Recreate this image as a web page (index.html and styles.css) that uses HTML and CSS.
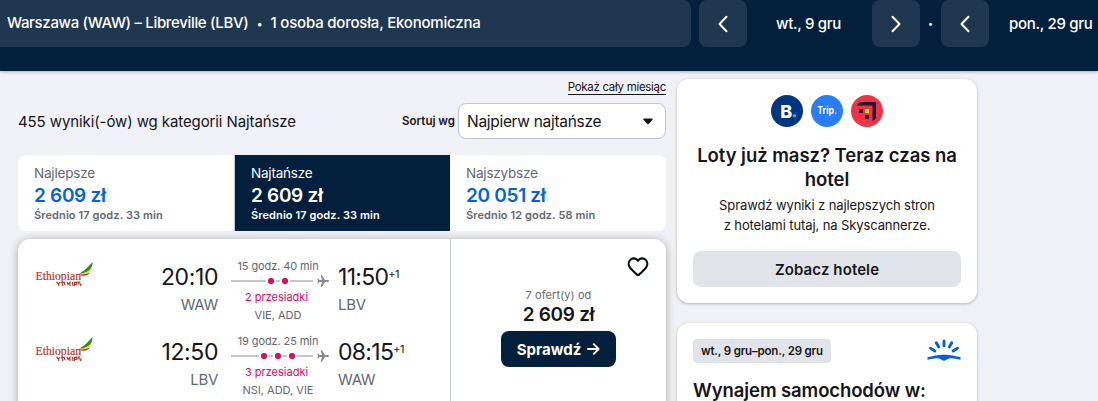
FILE: index.html
```html
<!DOCTYPE html>
<html lang="pl">
<head>
    <meta charset="UTF-8">
    <meta name="viewport" content="width=device-width, initial-scale=1.0">
    <title>Loty Warszawa – Libreville</title>
    <link rel="stylesheet" href="styles.css">
</head>
<body>
    <header class="header">
        <div class="search-summary"><span class="route">Warszawa (WAW) – Libreville (LBV)</span><span class="bullet">•</span><span class="travellers">1 osoba dorosła, Ekonomiczna</span></div>
        <button class="arrow-btn"><svg width="24" height="24" viewBox="0 0 24 24"><path d="M15.500 4.800L8.500 12l7 7.200"/></svg></button>
        <span class="date date-out">wt., 9 gru</span>
        <button class="arrow-btn"><svg width="24" height="24" viewBox="0 0 24 24"><path d="M8.500 4.800l7 7.200-7 7.200"/></svg></button>
        <span class="dot">•</span>
        <button class="arrow-btn"><svg width="24" height="24" viewBox="0 0 24 24"><path d="M15.500 4.800L8.500 12l7 7.200"/></svg></button>
        <span class="date date-back">pon., 29 gru</span>
    </header>

    <div class="page">
        <main class="results">
            <div class="month-row"><a class="month-link">Pokaż cały miesiąc</a></div>
            <div class="sort-row">
                <span class="count">455 wyniki(-ów) wg kategorii Najtańsze</span>
                <span class="sort-label">Sortuj wg</span>
                <div class="select">
                    <span>Najpierw najtańsze</span>
                    <svg width="10" height="7" viewBox="0 0 10 7"><path d="M1 .5h8c.8 0 1 .8.500 1.300L6 5.800c-.6.600-1.400.600-2 0L.5 1.800C0 1.300.2.500 1 .5z" fill="#161616"/></svg>
                </div>
            </div>

            <div class="tabs">
                <div class="tab">
                    <span class="tab-name">Najlepsze</span>
                    <span class="tab-price">2 609 zł</span>
                    <span class="tab-time">Średnio 17 godz. 33 min</span>
                </div>
                <div class="tab active">
                    <span class="tab-name">Najtańsze</span>
                    <span class="tab-price">2 609 zł</span>
                    <span class="tab-time">Średnio 17 godz. 33 min</span>
                </div>
                <div class="tab">
                    <span class="tab-name">Najszybsze</span>
                    <span class="tab-price">20 051 zł</span>
                    <span class="tab-time">Średnio 12 godz. 58 min</span>
                </div>
            </div>

            <div class="ticket">
                <div class="legs">
                    <div class="leg">
                        <svg class="airline" width="58" height="27" viewBox="0 0 58 27">
                            <path d="M56.500 0C52.500 4 50 8 43 11.800C51 11.500 57 7 56.500 0Z" fill="#2f8a1e"/>
                            <path d="M56 5.500C53.500 9.500 49 11.300 43 12C50 12.800 55 11 56 5.500Z" fill="#f6d21a"/>
                            <path d="M53.500 10.500C50 12.500 46 12.600 41.500 12.600C46 14.300 52 14.300 53.500 10.500Z" fill="#b3241c"/>
                            <text x="-.5" y="17.500" class="logo-name" textLength="45.500" lengthAdjust="spacingAndGlyphs">Ethiopian</text>
                            <path d="M20.500 20l2 2 1.500-2M22.500 22l.5 2M27 24l-1-3 2-1 1 3M31 20l1 2.500 2-2v3.500M36.500 20l.5 4M38.500 24v-3.500l2.500-.3v2l-2 .3M44.500 20h-2l.5 2h2l-.5 2"/>
                        </svg>
                        <div class="point depart"><span class="time">20:10</span><span class="code">WAW</span></div>
                        <div class="stops">
                            <span class="duration">15 godz. 40 min</span>
                            <div class="track">
                                <div class="line"><i></i><i></i></div>
                                <svg width="12" height="12" viewBox="0 0 12 12"><path d="M12 6c0-.6-.6-.9-1.300-.9H8L5 .3H3.600L5 5.100H2.300L1.200 3.500H.3L1 6l-.7 2.500h.9l1.100-1.600H5l-1.400 4.800H5l3-4.800h2.700c.7 0 1.300-.3 1.300-.9z" fill="#8c8799"/></svg>
                            </div>
                            <span class="stop-count">2 przesiadki</span>
                            <span class="via">VIE, ADD</span>
                        </div>
                        <div class="point arrive"><span class="time">11:50<sup>+1</sup></span><span class="code">LBV</span></div>
                    </div>
                    <div class="leg">
                        <svg class="airline" width="58" height="27" viewBox="0 0 58 27">
                            <path d="M56.500 0C52.500 4 50 8 43 11.800C51 11.500 57 7 56.500 0Z" fill="#2f8a1e"/>
                            <path d="M56 5.500C53.500 9.500 49 11.300 43 12C50 12.800 55 11 56 5.500Z" fill="#f6d21a"/>
                            <path d="M53.500 10.500C50 12.500 46 12.600 41.500 12.600C46 14.300 52 14.300 53.500 10.500Z" fill="#b3241c"/>
                            <text x="-.5" y="17.500" class="logo-name" textLength="45.500" lengthAdjust="spacingAndGlyphs">Ethiopian</text>
                            <path d="M20.500 20l2 2 1.500-2M22.500 22l.5 2M27 24l-1-3 2-1 1 3M31 20l1 2.500 2-2v3.500M36.500 20l.5 4M38.500 24v-3.500l2.500-.3v2l-2 .3M44.500 20h-2l.5 2h2l-.5 2"/>
                        </svg>
                        <div class="point depart"><span class="time">12:50</span><span class="code">LBV</span></div>
                        <div class="stops">
                            <span class="duration">19 godz. 25 min</span>
                            <div class="track">
                                <div class="line"><i></i><i></i><i></i></div>
                                <svg width="12" height="12" viewBox="0 0 12 12"><path d="M12 6c0-.6-.6-.9-1.300-.9H8L5 .3H3.600L5 5.100H2.300L1.200 3.500H.3L1 6l-.7 2.500h.9l1.100-1.600H5l-1.400 4.800H5l3-4.800h2.700c.7 0 1.300-.3 1.300-.9z" fill="#8c8799"/></svg>
                            </div>
                            <span class="stop-count">3 przesiadki</span>
                            <span class="via">NSI, ADD, VIE</span>
                        </div>
                        <div class="point arrive"><span class="time">08:15<sup>+1</sup></span><span class="code">WAW</span></div>
                    </div>
                </div>
                <div class="offer">
                    <svg class="heart" width="22" height="20" viewBox="0 0 22 20"><path d="M11 3.800C9.300.8 5.500.7 3.400 2.700 1 5 1.200 8.400 3.200 10.900c1.700 2.100 4.200 4.300 6.500 6.500.8.700 1.800.7 2.600 0 2.300-2.200 4.800-4.400 6.500-6.500 2-2.500 2.200-5.900-.2-8.200C16.500.7 12.700.8 11 3.800z" fill="none" stroke="#010913" stroke-width="2.100" stroke-linejoin="round"/></svg>
                    <span class="offer-count">7 ofert(y) od</span>
                    <span class="offer-price">2 609 zł</span>
                    <button class="check-btn"><span>Sprawdź</span><svg width="13" height="12" viewBox="0 0 13 12"><path d="M1 6h10.500M6.800 1.200L11.600 6l-4.800 4.800" fill="none" stroke="#fff" stroke-width="1.900" stroke-linecap="round" stroke-linejoin="round"/></svg></button>
                </div>
            </div>
        </main>

        <aside class="side">
            <div class="box hotels">
                <div class="partners">
                    <svg width="32" height="32" viewBox="0 0 32 32"><circle cx="16" cy="16" r="16" fill="#003580"/><text x="9.300" y="22.500" class="booking">B</text><circle cx="23.500" cy="20.700" r="1.800" fill="#00baff"/></svg>
                    <svg width="32" height="32" viewBox="0 0 32 32"><circle cx="16" cy="16" r="16" fill="#287dfa"/><text x="6.300" y="19.300" class="trip" textLength="19.500" lengthAdjust="spacingAndGlyphs">Trip<tspan fill="#ffb400">.</tspan></text></svg>
                    <svg width="32" height="32" viewBox="0 0 32 32"><circle cx="16" cy="16" r="16" fill="#ef3346"/><path d="M5.500 10.500L9 7h16v16l-3.500 3.500v-16z" fill="#1f1a33"/><path d="M8 14h4v4H8zM14 20h4v4h-4z" fill="#1f1a33"/><path d="M14 14h4v4h-4z" fill="#ffd52e"/></svg>
                </div>
                <h2>Loty już masz? Teraz czas na hotel</h2>
                <p>Sprawdź wyniki z najlepszych stron<br>z hotelami tutaj, na Skyscannerze.</p>
                <button class="hotels-btn">Zobacz hotele</button>
            </div>
            <div class="box cars">
                <div class="cars-top">
                    <span class="chip">wt., 9 gru–pon., 29 gru</span>
                    <svg width="34" height="22" viewBox="0 0 34 22"><path d="M17 1.900v5M9.300 3.700l2.300 4.200M24.700 3.700L22.400 7.900M3.500 9.300l4.400 2.700M30.500 9.300l-4.400 2.700" fill="none" stroke="#0062e3" stroke-width="2.900" stroke-linecap="round"/><path d="M.5 18.300C6 17.200 10 15.800 17 15.800s11 1.400 16.500 2.500v2.500c-4-1-8.500-2-11.500-1.300-2 .5-3.500 2.200-5 2.200s-3-1.700-5-2.200c-3-.7-7.500.3-11.500 1.300z" fill="#0062e3"/></svg>
                </div>
                <h2>Wynajem samochodów w:</h2>
            </div>
        </aside>
    </div>
</body>
</html>
```
FILE: styles.css
```css
* {
    box-sizing: border-box;
}
body {
    margin: 0;
    background-color: #eff1f6;
    color: #161616;
    font-family: Inter, "Noto Sans", sans-serif;
}
button {
    border: none;
    font-family: inherit;
}

/* header */
.header {
    display: flex;
    height: 71px;
    background-color: #05203c;
    box-shadow: 0 1px 3px rgba(37, 32, 31, 0.3);
    color: #fff;
    font-size: 15px;
    line-height: 47px;
    white-space: nowrap;
}
.search-summary {
    width: 691px;
    height: 47px;
    padding-left: 7px;
    background-color: #1f3850;
    border-radius: 0 8px 8px 0;
    font-weight: 500;
    line-height: 46px;
    letter-spacing: -0.2px;
}
.route {
    letter-spacing: -0.33px;
}
.bullet {
    display: inline-block;
    width: 22px;
    text-align: center;
    font-size: 11px;
}
.arrow-btn {
    display: flex;
    justify-content: center;
    align-items: center;
    width: 48px;
    height: 47px;
    padding: 0;
    background-color: #1f3850;
    border-radius: 8px;
}
.search-summary + .arrow-btn {
    margin-left: 8px;
}
.arrow-btn path {
    fill: none;
    stroke: #fff;
    stroke-width: 2;
    stroke-linecap: round;
    stroke-linejoin: round;
}
.date {
    font-weight: 500;
    letter-spacing: -0.3px;
}
.date-out {
    width: 125px;
    padding-left: 29px;
}
.dot {
    width: 21px;
    text-align: center;
    font-size: 9px;
}
.date-back {
    padding-left: 20px;
}

/* results */
.page {
    display: flex;
    align-items: flex-start;
    gap: 11px;
    height: 330px;
    padding: 8px 0 0 18px;
    overflow: hidden;
}
.results {
    width: 648px;
}
.month-row {
    display: flex;
    justify-content: flex-end;
    height: 24px;
}
.month-link {
    height: 16px;
    border-bottom: 1px solid #161616;
    font-size: 11.500px;
    line-height: 16px;
    letter-spacing: -0.3px;
}
.sort-row {
    display: flex;
    align-items: center;
    height: 36px;
}
.count {
    flex: 1;
    font-size: 15px;
    letter-spacing: -0.1px;
}
.sort-label {
    margin-right: 3px;
    font-size: 11.500px;
    font-weight: 600;
}
.select {
    display: flex;
    justify-content: space-between;
    align-items: center;
    width: 208px;
    height: 36px;
    padding: 0 12px 0 8px;
    background-color: #fff;
    border: 1px solid #c1c7cf;
    border-radius: 8px;
    font-size: 15.500px;
    letter-spacing: -0.3px;
}
.tabs {
    display: flex;
    height: 76px;
    margin: 16px 0 8px;
    background-color: #fff;
    border-radius: 8px;
}
.tab {
    display: flex;
    flex-direction: column;
    width: 216px;
    padding: 8px 16px 0;
    color: #626971;
}
.tab-name {
    font-size: 13.500px;
    line-height: 21px;
    letter-spacing: -0.2px;
}
.tab-price {
    color: #0062e3;
    font-size: 19px;
    font-weight: 600;
    line-height: 23px;
    letter-spacing: -0.3px;
}
.tab-time {
    font-size: 11px;
    font-weight: 600;
    line-height: 17px;
    letter-spacing: 0.1px;
}
.active {
    background-color: #05203c;
    border-left: 1px solid #c1c7cf;
}
.active span {
    color: #fff;
}

/* ticket */
.ticket {
    display: flex;
    height: 190px;
    background-color: #fff;
    border-radius: 12px;
    box-shadow: 0 1px 8px rgba(37, 32, 31, 0.35);
}
.legs {
    width: 433px;
    padding-top: 19px;
    border-right: 1px solid #c1c7cf;
}
.leg {
    display: flex;
    height: 75px;
}
.airline {
    margin: 4px 0 0 18px;
    fill: none;
    stroke-width: 1.200;
}
.airline path:last-child {
    stroke: #b3382c;
}
.logo-name {
    fill: #b3382c;
    stroke: #b3382c;
    stroke-width: 0.200;
    font-family: "Liberation Serif", serif;
    font-size: 11.500px;
}
.point {
    display: flex;
    flex-direction: column;
}
.depart {
    width: 124px;
    align-items: flex-end;
}
.arrive {
    margin-left: 9px;
}
.time {
    font-size: 23px;
    line-height: 38px;
    letter-spacing: -0.4px;
}
.arrive .time {
    letter-spacing: -0.7px;
}
.time sup {
    font-size: 11px;
    line-height: 0;
    vertical-align: 7px;
    letter-spacing: -0.5px;
}
.code {
    color: #626971;
    font-size: 15px;
    line-height: 17px;
    letter-spacing: -0.3px;
}
.stops {
    display: flex;
    flex-direction: column;
    align-items: center;
    width: 98px;
    margin-left: 13px;
    padding-right: 4px;
    color: #626971;
    font-size: 11px;
    white-space: nowrap;
}
.duration {
    line-height: 16px;
    letter-spacing: -0.1px;
}
.track {
    display: flex;
    align-items: center;
    gap: 4px;
    width: 98px;
    height: 14px;
    margin-right: -4px;
}
.line {
    display: flex;
    justify-content: center;
    align-items: center;
    gap: 4px;
    width: 82px;
    height: 2px;
    padding-left: 12px;
    background-color: #c1c7cf;
}
.line i {
    width: 10px;
    height: 6px;
    background: radial-gradient(circle, #e70866 2.800px, #fff 3.300px);
}
.stop-count {
    padding-right: 3px;
    color: #e70866;
    line-height: 18px;
}
.via {
    line-height: 18px;
}
.offer {
    display: flex;
    flex-direction: column;
    align-items: center;
    flex: 1;
    padding-top: 18px;
}
.heart {
    align-self: flex-end;
    margin-right: 17px;
}
.offer-count {
    margin-top: 10px;
    color: #626971;
    font-size: 11px;
    line-height: 16px;
    letter-spacing: 0.1px;
}
.offer-price {
    font-size: 19px;
    font-weight: 600;
    line-height: 24px;
    letter-spacing: -0.3px;
}
.check-btn {
    display: flex;
    justify-content: center;
    align-items: center;
    gap: 6px;
    width: 115px;
    height: 36px;
    margin-top: 4px;
    padding: 0;
    background-color: #05203c;
    border-radius: 8px;
    color: #fff;
    font-size: 15px;
    font-weight: 700;
}

/* side column */
.side {
    width: 300px;
}
.box {
    background-color: #fff;
    border-radius: 12px;
    box-shadow: 0 1px 3px rgba(37, 32, 31, 0.3);
}
.box h2 {
    margin: 0;
    font-weight: 600;
    line-height: 24px;
}
.hotels {
    height: 224px;
    margin-bottom: 20px;
    padding: 16px;
    text-align: center;
}
.hotels h2 {
    margin-top: 16px;
    font-size: 18.500px;
    letter-spacing: -0.05px;
}
.hotels p {
    margin: 4px 0 16px;
    font-size: 13px;
    line-height: 20px;
    letter-spacing: -0.1px;
}
.partners {
    display: flex;
    justify-content: center;
    gap: 8px;
}
.booking {
    fill: #fff;
    font-size: 18px;
    font-weight: 800;
}
.trip {
    fill: #fff;
    font-size: 10px;
    font-weight: 700;
}
.hotels-btn {
    display: block;
    width: 268px;
    height: 36px;
    background-color: #e0e4e9;
    border-radius: 8px;
    color: #161616;
    font-size: 15px;
    font-weight: 600;
    letter-spacing: 0.1px;
}
.cars {
    height: 160px;
    padding: 16px;
}
.cars-top {
    display: flex;
    justify-content: space-between;
    height: 39px;
}
.chip {
    height: 24px;
    padding: 0 8px;
    background-color: #e0e4e9;
    border-radius: 4px;
    font-size: 11.500px;
    font-weight: 600;
    line-height: 24px;
    letter-spacing: -0.18px;
}
.cars h2 {
    font-size: 18.500px;
    letter-spacing: -0.1px;
}
```
